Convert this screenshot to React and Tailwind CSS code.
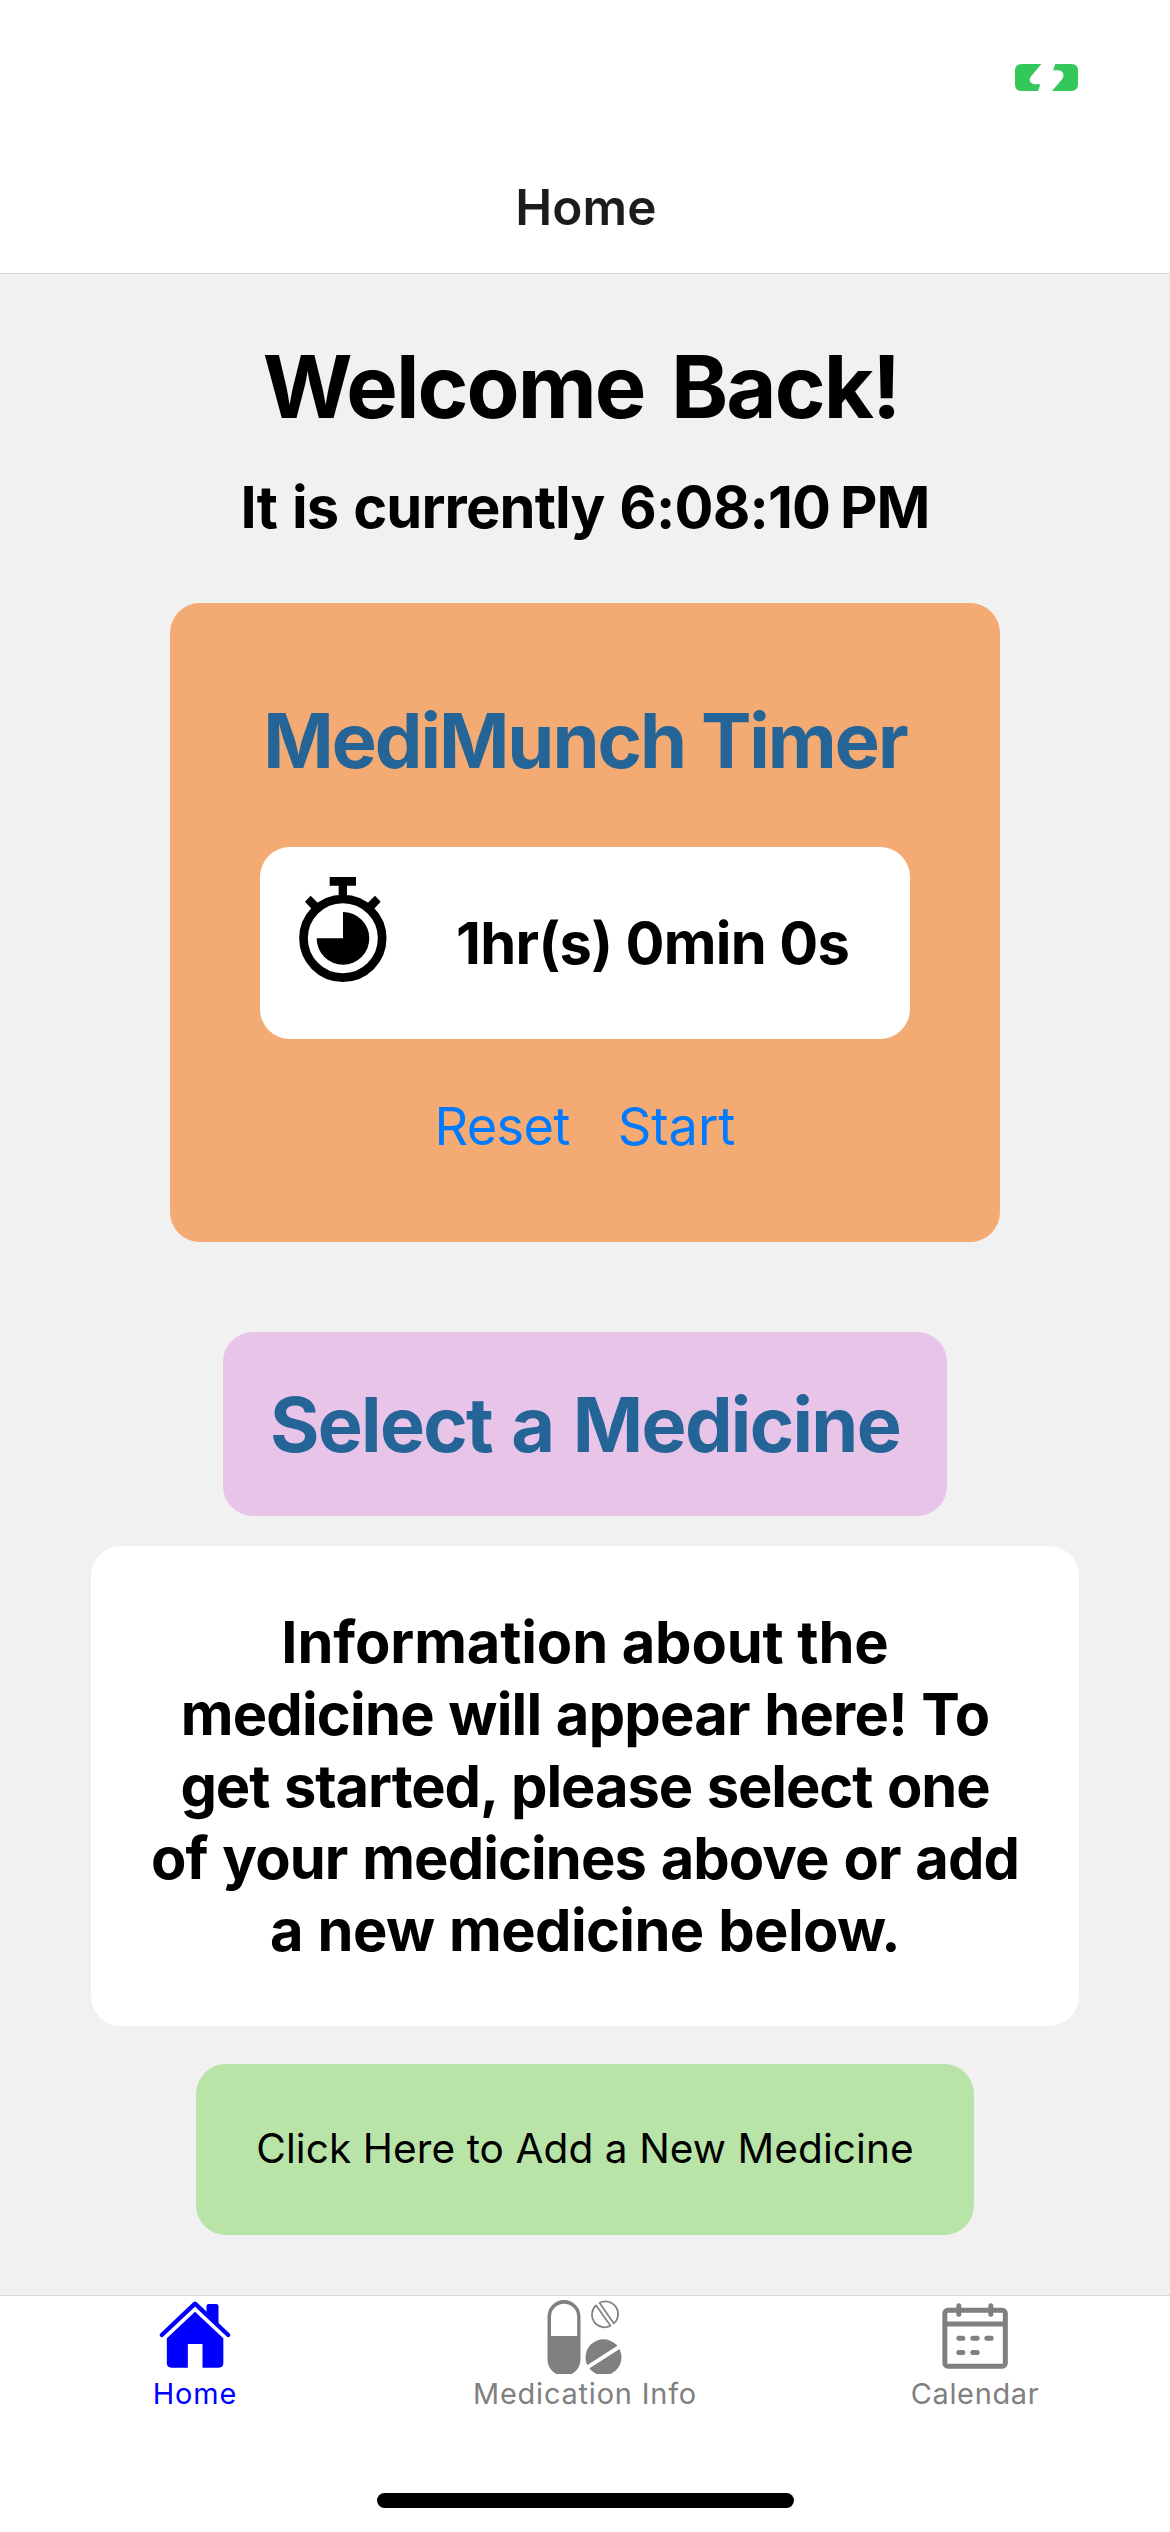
function BatteryIcon() {
  return (
    <svg className="h-[27px] w-[63px]" viewBox="105 72 189 81" fill="#34c759" aria-hidden="true">
      <path d="M125 72H184L154 108Q146 118 151 126Q155 132.500 164 132.500H181L174 153H125Q105 153 105 133V92Q105 72 125 72Z" />
      <path d="M226 72H274Q294 72 294 92V133Q294 153 274 153H216L245 119Q253 109 249 99Q245 91 236 91H219.500Z" />
    </svg>
  );
}

function StopwatchIcon() {
  return (
    <svg className="mt-[30px] ml-[39px] h-[105px] w-[88px] self-start" viewBox="56.500 81 263 315" aria-hidden="true">
      <path d="M148 81H227V107H200V145H175V107H148Z" />
      <path d="M91 137L74 155L97 180L116 162ZM284 137L301 155L278 180L259 162Z" />
      <circle cx="187.500" cy="265" r="118" fill="none" stroke="#000" strokeWidth="26" />
      <path d="M188 265V186A79 79 0 1 1 109 265Z" />
    </svg>
  );
}

function HomeIcon() {
  return (
    <svg className="size-[75px] overflow-visible" viewBox="52.500 45 225 225" fill="#0000ff" aria-hidden="true">
      <path d="M64 150L163.500 56L263 150" fill="none" stroke="#0000ff" strokeWidth="13" strokeLinecap="round" strokeLinejoin="round" />
      <path d="M198 84V64Q198 57 205 57H227Q234 57 234 64V118Z" />
      <path d="M163.500 80L248.500 160V234Q248.500 248 235 248H186V177H142V248H93Q79 248 79 234V160Z" />
    </svg>
  );
}

function PillsIcon() {
  return (
    <svg className="size-[75px] overflow-visible" viewBox="262.500 45 225 225" fill="#808080" aria-hidden="true">
      <clipPath id="pillFrame">
        <rect x="255" y="40" width="235" height="227" />
      </clipPath>
      <g clipPath="url(#pillFrame)">
        <path fillRule="evenodd" d="M261 95A49.500 50 0 0 1 360 95V223A49.500 50 0 0 1 261 223ZM271.500 153H350V96A39.250 40 0 0 0 271.500 96Z" />
        <circle cx="429" cy="217" r="54" />
        <path d="M376 250L482 182" stroke="#fff" strokeWidth="12" />
      </g>
      <path d="M406.500 61A38 38 0 0 0 450 122.500ZM417 53.500A38 38 0 0 1 460 115.500Z" fill="none" stroke="#808080" strokeWidth="5" strokeLinejoin="round" />
    </svg>
  );
}

function CalendarIcon() {
  return (
    <svg className="size-[75px]" viewBox="112.500 45 225 225" fill="none" stroke="#808080" strokeWidth="15" aria-hidden="true">
      <rect x="133" y="76" width="181.500" height="167.500" rx="9" />
      <path d="M133 117H314" />
      <path d="M175 62V88M271 62V88M175 160H187M217 160H230M259 160H272M175 202.500H187M217 202.500H230" strokeLinecap="round" />
    </svg>
  );
}

const infoLines = [
  { text: "Information about the", tracking: "tracking-[-0.11px]" },
  { text: "medicine will appear here! To", tracking: "tracking-[-0.76px] [word-spacing:1.5px]" },
  { text: "get started, please select one", tracking: "tracking-[-1.07px] [word-spacing:2px]" },
  { text: "of your medicines above or add", tracking: "tracking-[-0.9px] [word-spacing:2px]" },
  { text: "a new medicine below.", tracking: "tracking-[-0.6px] [word-spacing:1.5px]" },
];

const tabs = [
  { label: "Home", Icon: HomeIcon, style: "text-[#0000ff] tracking-[0.88px]" },
  { label: "Medication Info", Icon: PillsIcon, style: "text-[#808080] tracking-[0.83px]" },
  { label: "Calendar", Icon: CalendarIcon, style: "text-[#808080] tracking-[0.69px]" },
];

export default function App() {
  return (
    <div className="flex h-[2532px] w-[1170px] flex-col bg-white font-['Inter',sans-serif] text-black">
      <header className="flex h-[274px] flex-col border-b border-[#d8d8d8]">
        <div className="flex h-[141px] justify-end pt-16 pr-[92px]">
          <BatteryIcon />
        </div>
        <h1 className="pl-0.5 text-center text-[49.5px] leading-[132px] font-semibold tracking-[0.2px] text-[#1c1c1e]">Home</h1>
      </header>

      <main className="flex h-[2021px] flex-col items-center bg-[#f1f1f1] pt-[59px] font-bold">
        <h2 className="pr-2 text-[86.6px] leading-[108px] tracking-[-1.93px] [word-spacing:8px]">Welcome Back!</h2>
        <p className="mt-[30px] text-[57.8px] leading-[72px] tracking-[-0.83px] [word-spacing:2px]">
          It is currently 6:08:10<span className="tracking-[-6px]"> </span>PM
        </p>

        <section className="mt-[60px] flex h-[639px] w-[830px] flex-col items-center rounded-[30px] bg-[#f3ab73] pt-[91px]">
          <h2 className="text-[75.6px] leading-[93px] tracking-[-2px] text-[#246496]">MediMunch Timer</h2>
          <div className="mt-[60px] flex h-48 w-[650px] items-center rounded-[30px] bg-white">
            <StopwatchIcon />
            <span className="ml-[69px] text-[57.8px] leading-[72px] tracking-[-0.66px]">1hr(s) 0min 0s</span>
          </div>
          <div className="mt-[54px] flex gap-12 text-[52.3px] leading-[66px] font-normal text-[#007aff]">
            <button className="tracking-[-0.67px]">Reset</button>
            <button className="tracking-[-0.06px]">Start</button>
          </div>
        </section>

        <button className="mt-[90px] h-[184px] w-[724px] rounded-[30px] bg-[#e8c4e8] pt-0.5 text-[75.6px] tracking-[-1.67px] text-[#246496] [word-spacing:3px]">
          Select a Medicine
        </button>

        <section className="mt-[30px] flex h-[480px] w-[988px] flex-col justify-center rounded-[30px] bg-white text-center text-[57.8px] leading-[72px]">
          {infoLines.map(({ text, tracking }) => (
            <span key={text} className={tracking}>{text}</span>
          ))}
        </section>

        <button className="mt-[38px] h-[171px] w-[778px] rounded-[30px] bg-[#b9e4a7] text-[40.6px] font-normal tracking-[0.07px]">
          Click Here to Add a New Medicine
        </button>
      </main>

      <nav className="grid h-[165px] grid-cols-3 border-t border-[#d8d8d8] pt-1">
        {tabs.map(({ label, Icon, style }) => (
          <a key={label} className="flex flex-col items-center">
            <Icon />
            <span className={`text-[28.9px] leading-[37px] ${style}`}>{label}</span>
          </a>
        ))}
      </nav>
      <div className="mx-auto mt-[33px] h-[15px] w-[417px] rounded-full bg-black" />
    </div>
  );
}
